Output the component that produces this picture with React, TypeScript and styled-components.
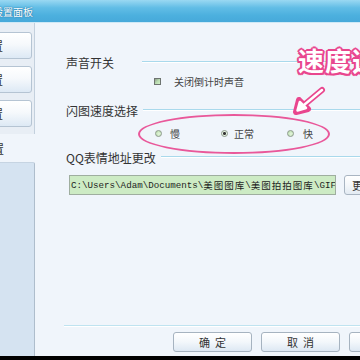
import React from "react";
import styled, { createGlobalStyle } from "styled-components";

const Global = createGlobalStyle`
  html, body { margin: 0; padding: 0; background: #000; }
  #root { width: 360px; height: 360px; }
`;

const CJK = `"Noto Sans CJK SC", "Noto Sans", sans-serif`;

const Window = styled.div`
  width: 360px;
  height: 360px;
  overflow: hidden;
  display: flex;
  flex-direction: column;
  background: #000;
  font-family: ${CJK};
`;

const TitleBar = styled.div`
  height: 22px;
  flex: none;
  display: flex;
  align-items: center;
  background: linear-gradient(180deg, #9ad8f2 0%, #62bde6 35%, #4cb0de 70%, #47a9da 100%);
  border-bottom: 1px solid #cfe9f6;
  overflow: hidden;
`;

const TitleText = styled.span`
  margin-left: -7px;
  font-size: 10px;
  color: #ffffff;
  white-space: nowrap;
  text-shadow: 0 0 1px #1f6f9e, 0 0 2px #2c83b4;
`;

const Body = styled.div`
  height: 333px;
  flex: none;
  display: flex;
  background: #f0f5fb;
`;

const Sidebar = styled.div`
  width: 35px;
  flex: none;
  display: flex;
  flex-direction: column;
`;

const TabGroup = styled.div`
  display: flex;
  flex-direction: column;
  gap: 7px;
  padding: 9px 0 7px 0;
  background: #e8eef5;
  border-right: 1px solid #c3d0dd;
`;

const TabButton = styled.div`
  margin-left: -3px;
  width: 35px;
  height: 27px;
  box-sizing: border-box;
  border: 1px solid #b5c4d3;
  border-radius: 3px;
  background: linear-gradient(180deg, #ffffff 0%, #f6f9fc 45%, #dde9f5 100%);
  display: flex;
  align-items: center;
  justify-content: flex-end;
  padding-right: 28px;
  overflow: hidden;
  white-space: nowrap;
  font-size: 12px;
  color: #333;
`;

const ActiveTab = styled.div`
  height: 28px;
  display: flex;
  align-items: center;
  justify-content: flex-end;
  padding-right: 31px;
  overflow: hidden;
  white-space: nowrap;
  font-size: 12px;
  color: #333;
`;

const SidePanel = styled.div`
  flex: 1;
  background: #d5e3f1;
  border-top: 1px solid #c6d4e2;
  border-right: 1px solid #aebdcc;
  border-top-right-radius: 2px;
`;

const Content = styled.div`
  position: relative;
  flex: 1;
  display: flex;
  flex-direction: column;
  padding: 32px 0 0 31px;
  min-width: 0;
`;

const HeadingRow = styled.div<{ $mt?: number }>`
  display: flex;
  align-items: center;
  height: 14px;
  margin-top: ${(p) => p.$mt ?? 0}px;
`;

const HeadingLabel = styled.span`
  min-width: 71px;
  font-size: 12px;
  color: #333;
  white-space: nowrap;
`;

const Rule = styled.div`
  flex: 1;
  margin-left: 5px;
  border-top: 1px solid #a9d9ec;
  border-bottom: 1px solid #ffffff;
`;

const OptionRow = styled.div<{ $mt: number; $pl: number }>`
  display: flex;
  align-items: center;
  height: 14px;
  margin-top: ${(p) => p.$mt}px;
  padding-left: ${(p) => p.$pl}px;
`;

const CheckBox = styled.span`
  width: 7px;
  height: 7px;
  box-sizing: border-box;
  border: 1px solid #6e7470;
  background: linear-gradient(135deg, #8e9a8c 0%, #b9dcb0 50%, #d4f0c8 100%);
`;

const OptionText = styled.span<{ $ml: number }>`
  margin-left: ${(p) => p.$ml}px;
  font-size: 10px;
  color: #444;
  white-space: nowrap;
`;

const RadioItem = styled.label`
  width: 66px;
  display: flex;
  align-items: center;
`;

const Radio = styled.span<{ $on?: boolean }>`
  width: 7px;
  height: 7px;
  box-sizing: border-box;
  border-radius: 50%;
  border: 1px solid #8d9a8c;
  background: ${(p) =>
    p.$on
      ? "radial-gradient(circle, #333 0 1.3px, #e9f4e4 1.6px)"
      : "radial-gradient(circle at 60% 60%, #e4f5dc 0, #b6dca8 100%)"};
`;

const InputRow = styled.div`
  display: flex;
  align-items: center;
  margin-top: 11px;
  height: 20px;
`;

const PathField = styled.div`
  flex: none;
  margin-left: 3px;
  width: 267px;
  height: 20px;
  box-sizing: border-box;
  border: 1px solid #9fae9f;
  background: #cdebc4;
  display: flex;
  align-items: center;
  padding-left: 1px;
  overflow: hidden;
  white-space: nowrap;
  font-family: "Liberation Mono", "Noto Sans CJK SC", monospace;
  font-size: 9.2px;
  color: #1e1e1e;
`;

const Wide = styled.span`
  font-family: ${CJK};
  font-size: 9.5px;
  letter-spacing: 1px;
`;

const SmallButton = styled.div`
  margin-left: 8px;
  flex: none;
  width: 40px;
  height: 20px;
  box-sizing: border-box;
  border: 1px solid #a9b5c2;
  border-radius: 3px;
  background: linear-gradient(180deg, #ffffff 0%, #f4f7fa 50%, #e3ebf3 100%);
  display: flex;
  align-items: center;
  padding-left: 7px;
  font-size: 11px;
  color: #333;
`;

const Spacer = styled.div`
  flex: 1;
`;

const Footer = styled.div`
  margin-left: -2px;
  border-top: 1px solid #bfe3f0;
  box-shadow: inset 0 1px 0 #ffffff;
  display: flex;
  gap: 9px;
  padding: 6px 0 4px 109px;
`;

const FooterButton = styled.div`
  flex: none;
  width: 79px;
  height: 20px;
  box-sizing: border-box;
  border: 1px solid #a6b3c0;
  border-radius: 3px;
  background: linear-gradient(180deg, #ffffff 0%, #f3f7fb 50%, #dde8f3 100%);
  display: flex;
  align-items: center;
  justify-content: center;
  font-size: 11px;
  letter-spacing: 5px;
  text-indent: 5px;
  color: #333;
`;

const Ellipse = styled.div`
  position: absolute;
  left: 103px;
  top: 91px;
  width: 192px;
  height: 40px;
  box-sizing: border-box;
  border: 2px solid #e9589a;
  border-radius: 50%;
  pointer-events: none;
`;

const Callout = styled.div`
  position: absolute;
  left: 263px;
  top: 23px;
  font-size: 26px;
  line-height: 28px;
  font-weight: bold;
  color: #ffffff;
  white-space: nowrap;
  letter-spacing: 1px;
  text-shadow:
    2px 0 0 #e9468e, -2px 0 0 #e9468e, 0 2px 0 #e9468e, 0 -2px 0 #e9468e,
    1.5px 1.5px 0 #e9468e, -1.5px 1.5px 0 #e9468e, 1.5px -1.5px 0 #e9468e, -1.5px -1.5px 0 #e9468e,
    0 0 3px #f07aae;
`;

const ArrowSvg = styled.svg`
  position: absolute;
  left: 258px;
  top: 62px;
  width: 34px;
  height: 30px;
  overflow: visible;
`;

export default function App() {
  return (
    <>
      <Global />
      <Window>
        <TitleBar>
          <TitleText>设置面板</TitleText>
        </TitleBar>
        <Body>
          <Sidebar>
            <TabGroup>
              <TabButton>基本设置</TabButton>
              <TabButton>好友设置</TabButton>
              <TabButton>热键设置</TabButton>
            </TabGroup>
            <ActiveTab>高级设置</ActiveTab>
            <SidePanel />
          </Sidebar>
          <Content>
            <HeadingRow>
              <HeadingLabel>声音开关</HeadingLabel>
              <Rule />
            </HeadingRow>
            <OptionRow $mt={5} $pl={88}>
              <CheckBox />
              <OptionText $ml={13}>关闭倒计时声音</OptionText>
            </OptionRow>
            <HeadingRow $mt={15}>
              <HeadingLabel>闪图速度选择</HeadingLabel>
              <Rule />
            </HeadingRow>
            <OptionRow $mt={9} $pl={89}>
              <RadioItem>
                <Radio />
                <OptionText $ml={8}>慢</OptionText>
              </RadioItem>
              <RadioItem>
                <Radio $on />
                <OptionText $ml={6}>正常</OptionText>
              </RadioItem>
              <RadioItem>
                <Radio />
                <OptionText $ml={9}>快</OptionText>
              </RadioItem>
            </OptionRow>
            <HeadingRow $mt={10}>
              <HeadingLabel>QQ表情地址更改</HeadingLabel>
              <Rule />
            </HeadingRow>
            <InputRow>
              <PathField>
                C:\Users\Adam\Documents\<Wide>美图图库</Wide>\<Wide>美图拍拍图库</Wide>\GIF
              </PathField>
              <SmallButton>更改</SmallButton>
            </InputRow>
            <Spacer />
            <Footer>
              <FooterButton>确定</FooterButton>
              <FooterButton>取消</FooterButton>
              <FooterButton>应用</FooterButton>
            </Footer>
            <Ellipse />
            <Callout>速度选择</Callout>
            <ArrowSvg viewBox="0 0 34 30">
              <g stroke="#e9468e" strokeWidth="6" strokeLinecap="round" strokeLinejoin="round" fill="#e9468e">
                <line x1="29" y1="5" x2="11" y2="20" />
                <polygon points="3,27 6,15 15,24" />
              </g>
              <g stroke="#ffffff" strokeWidth="2.5" strokeLinecap="round" strokeLinejoin="round" fill="#ffffff">
                <line x1="29" y1="5" x2="11" y2="20" />
                <polygon points="4.5,25.5 6.8,17 13,23" />
              </g>
            </ArrowSvg>
          </Content>
        </Body>
      </Window>
    </>
  );
}
